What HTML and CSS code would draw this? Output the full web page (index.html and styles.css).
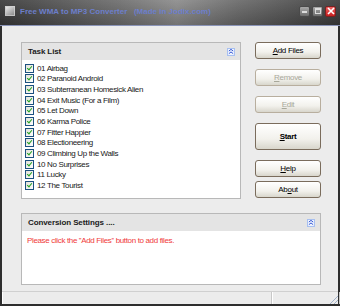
FILE: index.html
```html
<!DOCTYPE html>
<html lang="en">
<head>
    <meta charset="UTF-8">
    <title>Free WMA to MP3 Converter</title>
    <link rel="stylesheet" href="styles.css">
</head>
<body>
<div class="window">
    <div class="titleBar">
        <span class="appIcon"></span>
        <span class="titleText">Free WMA to MP3 Converter &nbsp; (Made in Jodix.com)</span>
        <div class="winBtns">
            <span class="winBtn minBtn"></span>
            <span class="winBtn maxBtn"></span>
            <span class="winBtn closeBtn">
                <svg width="8" height="8" viewBox="0 0 8 8"><path d="M1 1L7 7M7 1L1 7" stroke="#fff" stroke-width="1.6"/></svg>
            </span>
        </div>
    </div>

    <div class="client">
        <div class="topRow">
            <div class="panel taskPanel">
                <div class="panelHead">
                    <span>Task List</span>
                    <span class="collapse"><svg width="7" height="7" viewBox="0 0 7 7"><path d="M1 3L3.5 1L6 3M1 6L3.5 4L6 6" fill="none" stroke="#2a4fd0" stroke-width="1.1"/></svg></span>
                </div>
                <ul class="taskList">
                    <li><span class="chk"></span>01 Airbag</li>
                    <li><span class="chk"></span>02 Paranoid Android</li>
                    <li><span class="chk"></span>03 Subterranean Homesick Alien</li>
                    <li><span class="chk"></span>04 Exit Music (For a Film)</li>
                    <li><span class="chk"></span>05 Let Down</li>
                    <li><span class="chk"></span>06 Karma Police</li>
                    <li><span class="chk"></span>07 Fitter Happier</li>
                    <li><span class="chk"></span>08 Electioneering</li>
                    <li><span class="chk"></span>09 Climbing Up the Walls</li>
                    <li><span class="chk"></span>10 No Surprises</li>
                    <li><span class="chk"></span>11 Lucky</li>
                    <li><span class="chk"></span>12 The Tourist</li>
                </ul>
            </div>

            <div class="btnCol">
                <button class="btn"><u>A</u>dd Files</button>
                <button class="btn off"><u>R</u>emove</button>
                <button class="btn off"><u>E</u>dit</button>
                <button class="btn startBtn"><u>S</u>tart</button>
                <button class="btn helpBtn"><u>H</u>elp</button>
                <button class="btn aboutBtn">Ab<u>o</u>ut</button>
            </div>
        </div>

        <div class="panel convPanel">
            <div class="panelHead">
                <span>Conversion Settings ....</span>
                <span class="collapse"><svg width="7" height="7" viewBox="0 0 7 7"><path d="M1 3L3.5 1L6 3M1 6L3.5 4L6 6" fill="none" stroke="#2a4fd0" stroke-width="1.1"/></svg></span>
            </div>
            <div class="convBody">Please click the ''Add Files'' button to add files.</div>
        </div>

        <div class="statusBar">
            <div class="statusCell wide"></div>
            <div class="statusCell"></div>
            <span class="grip"></span>
        </div>
    </div>
</div>
</body>
</html>
```

FILE: styles.css
```css
body {
    margin: 0;
    font-family: 'Liberation Sans', Arial, sans-serif;
    font-size: 8px;
    color: #000;
}
.window {
    width: 340px;
    height: 306px;
    display: flex;
    flex-direction: column;
    background: #2e2e2e;
}
.titleBar {
    height: 25px;
    display: flex;
    align-items: center;
    padding: 0 4px 0 5px;
    background: linear-gradient(to right, #3a3a3a 0%, #6e6e6e 35%, #8c8c8c 52%, #6a6a6a 70%, #3c3c3c 100%);
    border-bottom: 1px solid #8a94b8;
    position: relative;
}
.titleBar::after {
    content: '';
    position: absolute;
    left: 0;
    right: 0;
    top: 0;
    bottom: 0;
    background: linear-gradient(to bottom, rgba(255,255,255,0.08), rgba(0,0,0,0.18));
}
.appIcon {
    width: 8px;
    height: 8px;
    border: 1px solid #d8d8d8;
    background: linear-gradient(135deg, #f4f4f4, #9a9a9a);
    margin-top: -3px;
}
.titleText {
    margin-left: 5px;
    margin-top: -3px;
    font-weight: bold;
    font-size: 8px;
    color: #6f84dc;
    white-space: pre;
}
.winBtns {
    margin-left: auto;
    display: flex;
    gap: 2px;
    margin-top: -3px;
    z-index: 1;
}
.winBtn {
    width: 11px;
    height: 11px;
    border-radius: 2px;
    background: linear-gradient(#a8a8a8, #6c6c6c);
    border: 1px solid #4a4a4a;
    display: flex;
    align-items: center;
    justify-content: center;
    box-sizing: border-box;
}
.minBtn::before {
    content: '';
    width: 5px;
    height: 2px;
    background: #dcdcdc;
    margin-top: 1px;
}
.maxBtn::before {
    content: '';
    width: 4px;
    height: 3px;
    border: 1px solid #dcdcdc;
    border-top-width: 2px;
}
.closeBtn {
    background: linear-gradient(#f06060, #c82020);
    border-color: #7a2020;
}
.client {
    flex: 1;
    background: #ececec;
    margin: 0 2px 2px 2px;
    display: flex;
    flex-direction: column;
    padding: 16px 0 0 19px;
}
.topRow {
    display: flex;
    align-items: flex-start;
}
.panel {
    border: 1px solid #b8b8b8;
    background: #fff;
}
.panelHead {
    height: 17px;
    background: #e4e4e4;
    display: flex;
    align-items: center;
    justify-content: space-between;
    padding: 0 5px 0 6px;
    font-weight: bold;
    font-size: 8px;
    letter-spacing: -0.1px;
    color: #202020;
}
.collapse {
    width: 8px;
    height: 8px;
    border: 1px solid #a8c0f0;
    background: #eef3ff;
    display: flex;
    align-items: center;
    justify-content: center;
    box-sizing: border-box;
}
.taskPanel {
    width: 218px;
    height: 155px;
}
.taskList {
    list-style: none;
    margin: 0;
    padding: 3px 0 0 3px;
    letter-spacing: -0.35px;
}
.taskList li {
    height: 10.67px;
    display: flex;
    align-items: center;
    color: #202020;
}
.chk {
    width: 9px;
    height: 9px;
    box-sizing: border-box;
    border: 1px solid #1c5180;
    background: linear-gradient(135deg, #e0e0d8, #fff);
    margin-right: 3px;
    position: relative;
}
.chk::after {
    content: '';
    position: absolute;
    left: 2px;
    top: 0px;
    width: 2px;
    height: 4px;
    border: solid #21a121;
    border-width: 0 1.5px 1.5px 0;
    transform: rotate(40deg);
}
.btnCol {
    margin-left: 14px;
    width: 66px;
    display: flex;
    flex-direction: column;
}
.btn {
    height: 17px;
    margin: 0 0 10px 0;
    padding: 0;
    border: 1px solid #7a6c5c;
    border-radius: 3px;
    background: linear-gradient(#ffffff, #f2f1ec 60%, #d8d6cc);
    font-family: 'Liberation Sans', Arial, sans-serif;
    font-size: 8px;
    letter-spacing: -0.3px;
    color: #000;
}
.btn.off {
    color: #a8a89a;
    border-color: #b8ae9e;
}
.startBtn {
    height: 27px;
    font-weight: bold;
}
.helpBtn {
    margin-bottom: 4px;
}
.aboutBtn {
    margin-bottom: 0;
}
.convPanel {
    width: 298px;
    height: 70px;
    margin-top: 14px;
}
.convBody {
    padding: 5px 5px;
    color: #f03a3a;
    font-size: 8px;
    letter-spacing: -0.35px;
}
.statusBar {
    margin: auto 0 0 -19px;
    height: 12px;
    display: flex;
    border-top: 1px solid #d0d0d0;
    position: relative;
}
.statusCell {
    border-left: 1px solid #fff;
    border-right: 1px solid #c8c8c8;
    flex: 0 0 66px;
}
.statusCell.wide {
    flex: 0 0 268px;
}
.grip {
    position: absolute;
    right: 0;
    bottom: 0;
    width: 10px;
    height: 10px;
    background: repeating-linear-gradient(135deg, transparent 0 2px, #a0b0c8 2px 3px);
    clip-path: polygon(100% 0, 100% 100%, 0 100%);
}
```
